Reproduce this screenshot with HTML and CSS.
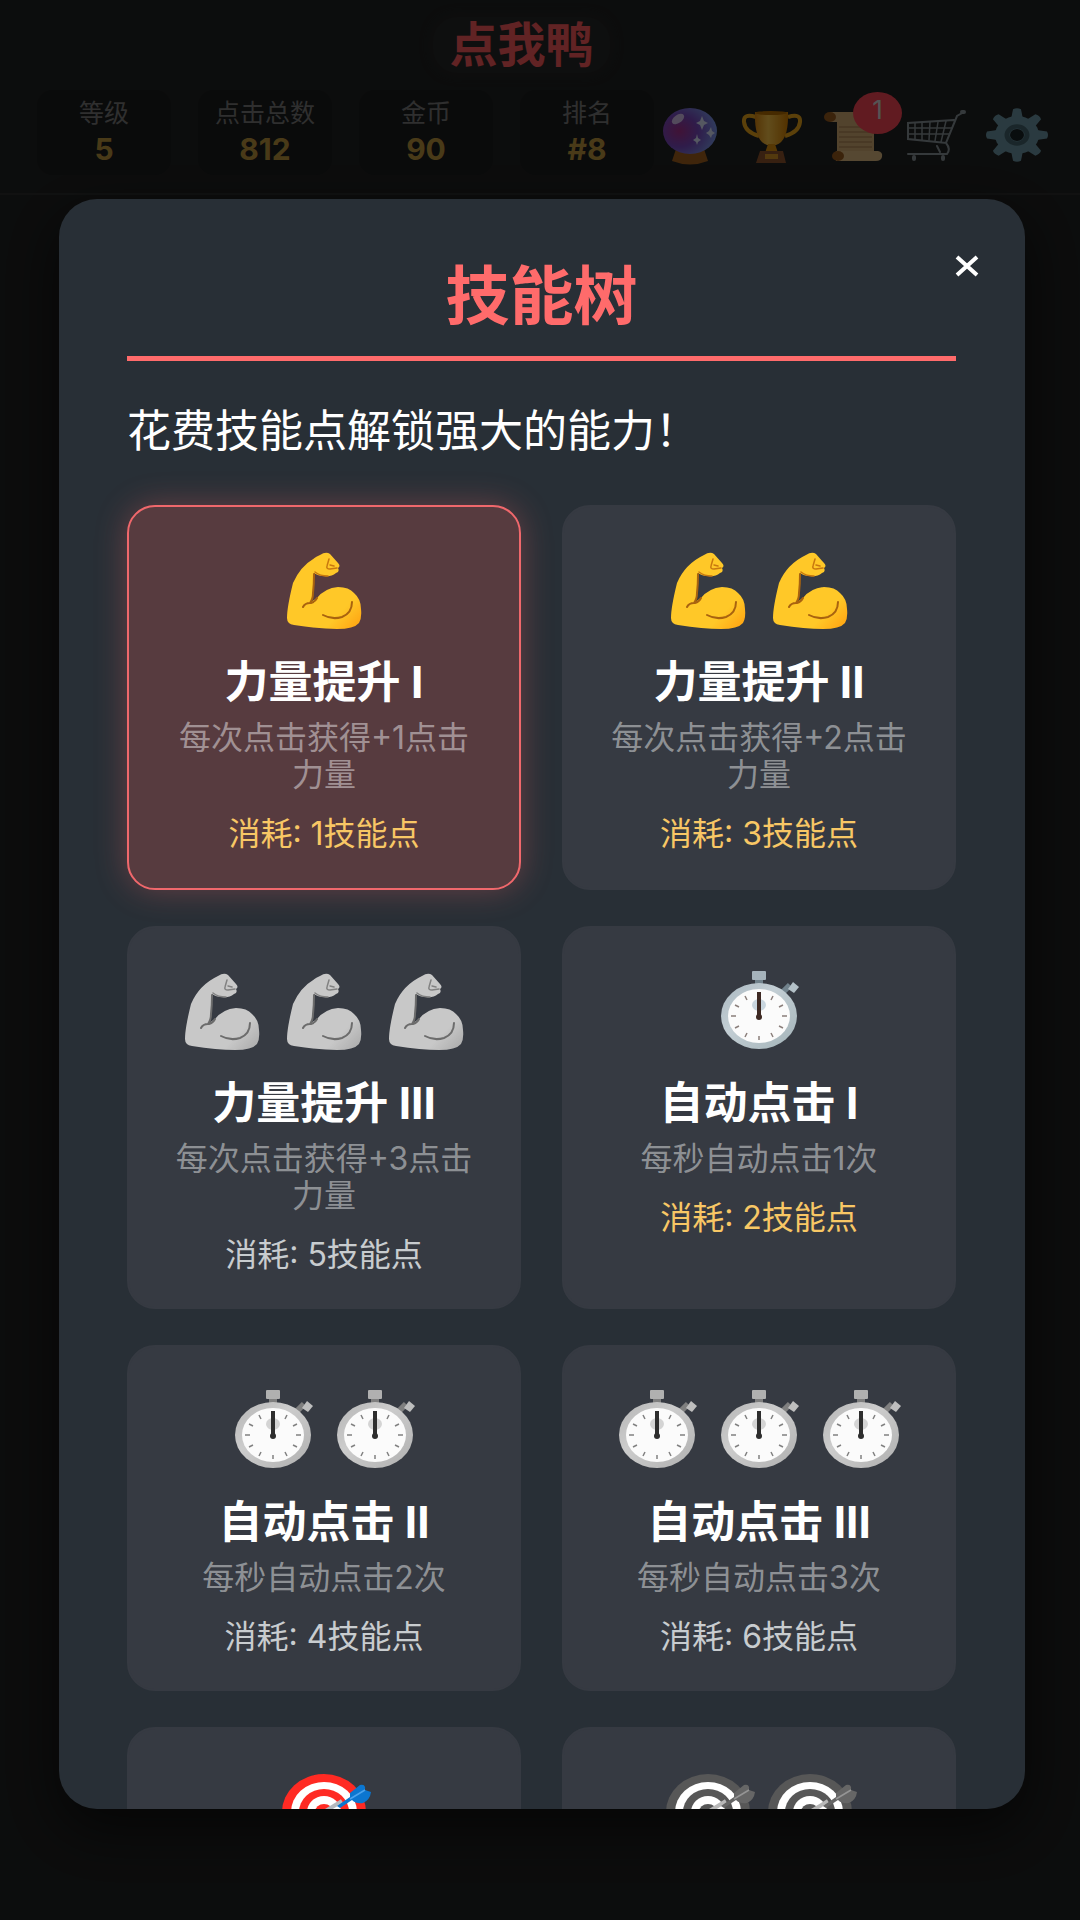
FILE: index.html
```html
<!DOCTYPE html>
<html lang="zh-CN">
<head>
<meta charset="UTF-8">
<meta name="viewport" content="width=device-width, initial-scale=1.0">
<title>点我鸭</title>
<link rel="stylesheet" href="styles.css">
</head>
<body>

<!-- Shared icons -->
<svg class="sprite" aria-hidden="true">
  <defs>
    <linearGradient id="skin" x1="0" y1="0" x2="1" y2="1">
      <stop offset="0.75" stop-color="#ffc828"/>
      <stop offset="1" stop-color="#ff9f0f"/>
    </linearGradient>
    <linearGradient id="metal" x1="0" y1="0" x2="1" y2="1">
      <stop offset="0" stop-color="#a9b7c0"/>
      <stop offset="0.4" stop-color="#c3ced4"/>
      <stop offset="1" stop-color="#a3b3b8"/>
    </linearGradient>
    <radialGradient id="orb" cx="0.3" cy="0.5" r="0.7">
      <stop offset="0" stop-color="#a8328f"/>
      <stop offset="0.5" stop-color="#7b4bc4"/>
      <stop offset="1" stop-color="#7f9cf0"/>
    </radialGradient>
    <linearGradient id="gold">
      <stop offset="0" stop-color="#e08a10"/>
      <stop offset="0.4" stop-color="#ffc94a"/>
      <stop offset="1" stop-color="#d98200"/>
    </linearGradient>
  </defs>

  <symbol id="arm" viewBox="0 0 80 80">
    <path fill="url(#skin)" d="M36 5Q42 1 46 4L54 13Q57 16 54 18Q56 22 52 23Q47 27 40 26Q34 26 30 23Q30 34 29 43Q29 49 27 52L33 48Q41 38 54 37Q65 37 70 43Q77 49 77 59Q78 68 75 73Q70 79 53 79Q35 79 10 75Q3 74 3 68Q3 57 9 33Q17 14 36 5Z"/>
    <path fill="none" stroke="#a9630f" stroke-width="2" stroke-linecap="round" d="M30 24Q30 35 29 43Q29 49 26 53Q21 53 19 57M27 53Q31 52 33 48M39 65Q48 70 58 67Q68 63 68 52"/>
    <path fill="none" stroke="#c8780f" stroke-width="1.500" stroke-linecap="round" d="M45 9L43 16Q42 19 46 19L53 18M46 15L50 16M31 22Q36 26 44 26"/>
  </symbol>

  <symbol id="watch" viewBox="0 0 80 80">
    <rect x="36" y="5" width="8" height="8" fill="#71828c"/>
    <rect x="33" y="0" width="14" height="9" rx="1" fill="#a5b2bb"/>
    <path d="M64 21L71 14" stroke="#71828c" stroke-width="6"/>
    <path d="M69 18L74 11L80 16L75 22Z" fill="#b3c0c7"/>
    <ellipse cx="40" cy="45" rx="38" ry="33" fill="url(#metal)"/>
    <ellipse cx="40" cy="45" rx="31" ry="27" fill="#fbfbfb"/>
    <ellipse cx="40" cy="34" rx="7" ry="6" fill="#c9d6df"/>
    <g stroke="#8b7f7b" stroke-width="1.500">
      <path d="M12 45h5M63 45h5M40 65v4M16 34l4 2M64 34l-4 2M16 57l4-2M64 57l-4-2M26 25l2 4M54 25l-2 4M26 66l2-4M54 66l-2-4"/>
    </g>
    <path d="M38 21H42V46H38Z" fill="#3e2a24"/>
    <ellipse cx="40" cy="46" rx="3" ry="3" fill="#3e2a24"/>
  </symbol>

  <symbol id="target" viewBox="0 0 80 80">
    <ellipse cx="40" cy="40" rx="42" ry="38" fill="#ff2a23"/>
    <ellipse cx="40" cy="40" rx="33" ry="30" fill="#fff"/>
    <ellipse cx="40" cy="40" rx="25" ry="23" fill="#ff2a23"/>
    <ellipse cx="40" cy="40" rx="17" ry="16" fill="#fff"/>
    <ellipse cx="40" cy="40" rx="9" ry="8" fill="#ff2a23"/>
    <path d="M40 40L58 29" stroke="#b4b9be" stroke-width="4"/>
    <path d="M53 34L66 25L66 21L76 13Q82 12 81 18L87 20Q86 28 79 31Q72 32 68 28L56 36Z" fill="#0b76d0"/>
    <path d="M66 27L81 18" stroke="#4aa3ee" stroke-width="1.500"/>
  </symbol>
</svg>

<header class="header">
  <h1 class="logo">点我鸭</h1>
  <div class="topbar">
    <div class="stats">
      <div class="stat"><span class="stat-label">等级</span><span class="stat-value">5</span></div>
      <div class="stat"><span class="stat-label">点击总数</span><span class="stat-value">812</span></div>
      <div class="stat"><span class="stat-label">金币</span><span class="stat-value">90</span></div>
      <div class="stat"><span class="stat-label">排名</span><span class="stat-value">#8</span></div>
    </div>
    <nav class="tools">
      <button class="tool" type="button" aria-label="技能树">
        <svg viewBox="0 0 62 60">
          <path d="M18 46H46L50 58Q32 65 14 58Z" fill="#a5621f"/>
          <ellipse cx="32" cy="28" rx="27" ry="23" fill="url(#orb)"/>
          <ellipse cx="20" cy="16" rx="7" ry="4" fill="#d9c4f2" transform="rotate(-35 20 16)"/>
          <path d="M44 13L46 18L50 20L46 22L44 27L42 22L38 20L42 18ZM53 24L54 28L57 30L54 32L53 35L51 32L48 30L51 28ZM39 31L40 35L43 37L40 39L39 42L38 39L35 37L38 35Z" fill="#dfe6ff"/>
        </svg>
      </button>
      <button class="tool" type="button" aria-label="成就">
        <svg viewBox="0 0 62 60">
          <path d="M16 14Q3 10 4 19Q5 29 19 33M48 14Q61 10 60 19Q59 29 45 33" fill="none" stroke="#f0a81c" stroke-width="4"/>
          <path d="M15 9H48Q49 38 36 42H27Q14 38 15 9Z" fill="url(#gold)"/>
          <ellipse cx="31" cy="10" rx="16" ry="2" fill="#b96f00"/>
          <path d="M28 41H35L38 50H25Z" fill="#e3940e"/>
          <path d="M20 48H43L46 60H16Z" fill="#92552d"/>
          <rect x="25" y="51" width="13" height="5" fill="#d99526"/>
        </svg>
      </button>
      <button class="tool" type="button" aria-label="任务 1">
        <svg viewBox="0 0 62 60">
          <path d="M8 9H48Q52 10 52 16V50H15V19H8Z" fill="#d8b078"/>
          <path d="M17 24H50M17 29H50M17 34H50M17 39H50M17 44H50" stroke="#a67e4e" stroke-width="1"/>
          <path d="M14 48H56Q61 49 60 54Q59 58 54 58H14Z" fill="#e3bd84"/>
          <ellipse cx="8" cy="14" rx="6" ry="5" fill="#9b5c1f"/>
          <ellipse cx="16" cy="53" rx="6" ry="5" fill="#9b5c1f"/>
        </svg>
        <span class="badge">1</span>
      </button>
      <button class="tool" type="button" aria-label="商店">
        <svg viewBox="0 0 62 60" fill="none" stroke="#8c969c" stroke-linecap="round">
          <path stroke-width="2" d="M60 9L53 13L42 40L4 36V20L50 17M42 40Q47 46 43 51H4"/>
          <path stroke-width="1.500" d="M11 20V36M18 20V37M26 19L25 37M34 19L31 38M42 18L37 39M4 25H48M4 31H45"/>
          <path stroke-width="4" d="M58 9H60M10 54V56M39 54V56"/>
          <path stroke-width="2" d="M33 43L36 49"/>
        </svg>
      </button>
      <button class="tool" type="button" aria-label="设置">
        <svg viewBox="0 0 62 60">
          <g transform="translate(31 32) scale(1 0.860)">
            <g fill="#6f9aa8">
              <path id="tooth" d="M-6 -18L-4 -30Q0 -32 4 -30L6 -18V18L4 30Q0 32 -4 30L-6 18Z"/>
              <use href="#tooth" transform="rotate(45)"/>
              <use href="#tooth" transform="rotate(90)"/>
              <use href="#tooth" transform="rotate(135)"/>
            </g>
            <circle r="22" fill="#6f9aa8"/>
            <circle r="10" fill="none" stroke="#45646f" stroke-width="5"/>
            <circle r="7" fill="#1a2225"/>
          </g>
        </svg>
      </button>
    </nav>
  </div>
</header>

<div class="overlay">
  <div class="modal" role="dialog" aria-labelledby="modal-title">
    <button class="close" type="button" aria-label="关闭">
      <svg viewBox="0 0 26 24"><path d="M3 3L23 21M23 3L3 21"/></svg>
    </button>
    <h2 class="modal-title" id="modal-title">技能树</h2>
    <p class="modal-text">花费技能点解锁强大的能力！</p>

    <div class="skills">
      <button class="skill unlocked" type="button">
        <span class="icons"><svg><use href="#arm"/></svg></span>
        <span class="name">力量提升 I</span>
        <span class="desc">每次点击获得+1点击力量</span>
        <span class="cost">消耗: 1技能点</span>
      </button>
      <button class="skill" type="button">
        <span class="icons"><svg><use href="#arm"/></svg><svg><use href="#arm"/></svg></span>
        <span class="name">力量提升 II</span>
        <span class="desc">每次点击获得+2点击力量</span>
        <span class="cost">消耗: 3技能点</span>
      </button>
      <button class="skill locked" type="button">
        <span class="icons"><svg><use href="#arm"/></svg><svg><use href="#arm"/></svg><svg><use href="#arm"/></svg></span>
        <span class="name">力量提升 III</span>
        <span class="desc">每次点击获得+3点击力量</span>
        <span class="cost">消耗: 5技能点</span>
      </button>
      <button class="skill" type="button">
        <span class="icons"><svg><use href="#watch"/></svg></span>
        <span class="name">自动点击 I</span>
        <span class="desc">每秒自动点击1次</span>
        <span class="cost">消耗: 2技能点</span>
      </button>
      <button class="skill locked" type="button">
        <span class="icons"><svg><use href="#watch"/></svg><svg><use href="#watch"/></svg></span>
        <span class="name">自动点击 II</span>
        <span class="desc">每秒自动点击2次</span>
        <span class="cost">消耗: 4技能点</span>
      </button>
      <button class="skill locked" type="button">
        <span class="icons"><svg><use href="#watch"/></svg><svg><use href="#watch"/></svg><svg><use href="#watch"/></svg></span>
        <span class="name">自动点击 III</span>
        <span class="desc">每秒自动点击3次</span>
        <span class="cost">消耗: 6技能点</span>
      </button>
      <button class="skill" type="button" aria-label="技能 7">
        <span class="icons"><svg><use href="#target"/></svg></span>
      </button>
      <button class="skill locked" type="button" aria-label="技能 8">
        <span class="icons"><svg><use href="#target"/></svg><svg><use href="#target"/></svg></span>
      </button>
    </div>
  </div>
</div>

</body>
</html>
```
FILE: styles.css
```css
* {
  box-sizing: border-box;
  margin: 0;
  padding: 0;
}

body {
  min-height: 100vh;
  background-color: #212222;
  color: #fff;
  font-family: Inter, "Noto Sans CJK SC", sans-serif;
}

button {
  border: none;
  background: none;
  color: inherit;
  font-family: inherit;
  cursor: pointer;
}

svg {
  overflow: visible;
}

symbol {
  overflow: visible;
}

.sprite {
  position: absolute;
  width: 0;
  height: 0;
}

/* Header */
.header {
  display: flex;
  flex-direction: column;
  gap: 17px;
  padding: 17px 32px 18px 37px;
  border-bottom: 2px solid #2d2f2f;
}

.logo {
  align-self: center;
  margin-right: 42px;
  padding: 0 16px;
  border-radius: 24px;
  background-color: #272828;
  box-shadow: 0 0 12px #272828;
  color: #ff5c5f;
  font-size: 48px;
  line-height: 56px;
}

.topbar {
  display: flex;
  align-items: center;
  gap: 4px;
}

.stats {
  display: flex;
  flex: 1;
  gap: 27px;
}

.stat {
  display: flex;
  flex: 1;
  flex-direction: column;
  align-items: center;
  padding: 5px 0 8px;
  border-radius: 16px;
  background-color: #1c1e1f;
}

.stat-label {
  color: #7d7d7d;
  font-size: 25px;
  line-height: 36px;
  white-space: nowrap;
}

.stat-value {
  color: #c09a40;
  font-size: 30px;
  font-weight: 700;
  line-height: 36px;
}

.tools {
  display: flex;
  gap: 20px;
}

.tool {
  position: relative;
  width: 62px;
  height: 60px;
}

.tool svg {
  display: block;
  width: 100%;
  height: 100%;
}

.badge {
  position: absolute;
  top: -11px;
  right: -18px;
  width: 49px;
  height: 42px;
  border-radius: 50%;
  background-color: #ff4757;
  color: #ddd;
  font-size: 26px;
  line-height: 36px;
}

/* Skill tree dialog */
.overlay {
  position: fixed;
  inset: 0;
  padding: 199px 55px 111px 59px;
  background-color: rgba(0, 0, 0, 0.62);
}

.modal {
  position: relative;
  height: 100%;
  padding: 61px 69px 61px 68px;
  border-radius: 38px;
  background-color: #282f36;
  box-shadow: 0 20px 56px rgba(0, 0, 0, 0.6);
  overflow-y: auto;
  scrollbar-width: none;
}

.close {
  position: absolute;
  top: 49px;
  right: 40px;
  display: grid;
  place-items: center;
  width: 36px;
  height: 36px;
}

.close svg {
  width: 26px;
  height: 24px;
  fill: none;
  stroke: #fff;
  stroke-width: 4;
}

.modal-title {
  padding-bottom: 24px;
  border-bottom: 5px solid #ff6b6b;
  color: #ff6b6b;
  font-size: 64px;
  line-height: 72px;
  text-align: center;
}

.modal-text {
  margin: 44px 0 48px;
  font-size: 44px;
  line-height: 52px;
}

.skills {
  display: grid;
  grid-template-columns: 1fr 1fr;
  gap: 36px 41px;
}

.skill {
  display: flex;
  flex-direction: column;
  align-items: center;
  justify-content: flex-start;
  min-height: 346px;
  padding: 43px 40px 34px;
  border: 2px solid #363a42;
  border-radius: 28px;
  background-color: #363a42;
}

.unlocked {
  padding-bottom: 36px;
  border-color: #f0686c;
  background-color: #573b3f;
  box-shadow: 0 0 32px rgba(255, 107, 107, 0.3);
}

.icons {
  display: flex;
  gap: 22px;
}

.icons svg {
  width: 80px;
  height: 80px;
}

.locked .icons {
  filter: grayscale(1);
}

.name {
  margin-top: 26px;
  font-size: 44px;
  font-weight: 700;
  line-height: 52px;
  white-space: nowrap;
}

.desc {
  margin-top: 11px;
  color: rgba(255, 255, 255, 0.45);
  font-size: 32px;
  line-height: 37px;
}

.cost {
  margin-top: 22px;
  color: #f8c765;
  font-size: 32px;
  line-height: 37px;
}

.locked .cost {
  color: #c8cccf;
}
```
